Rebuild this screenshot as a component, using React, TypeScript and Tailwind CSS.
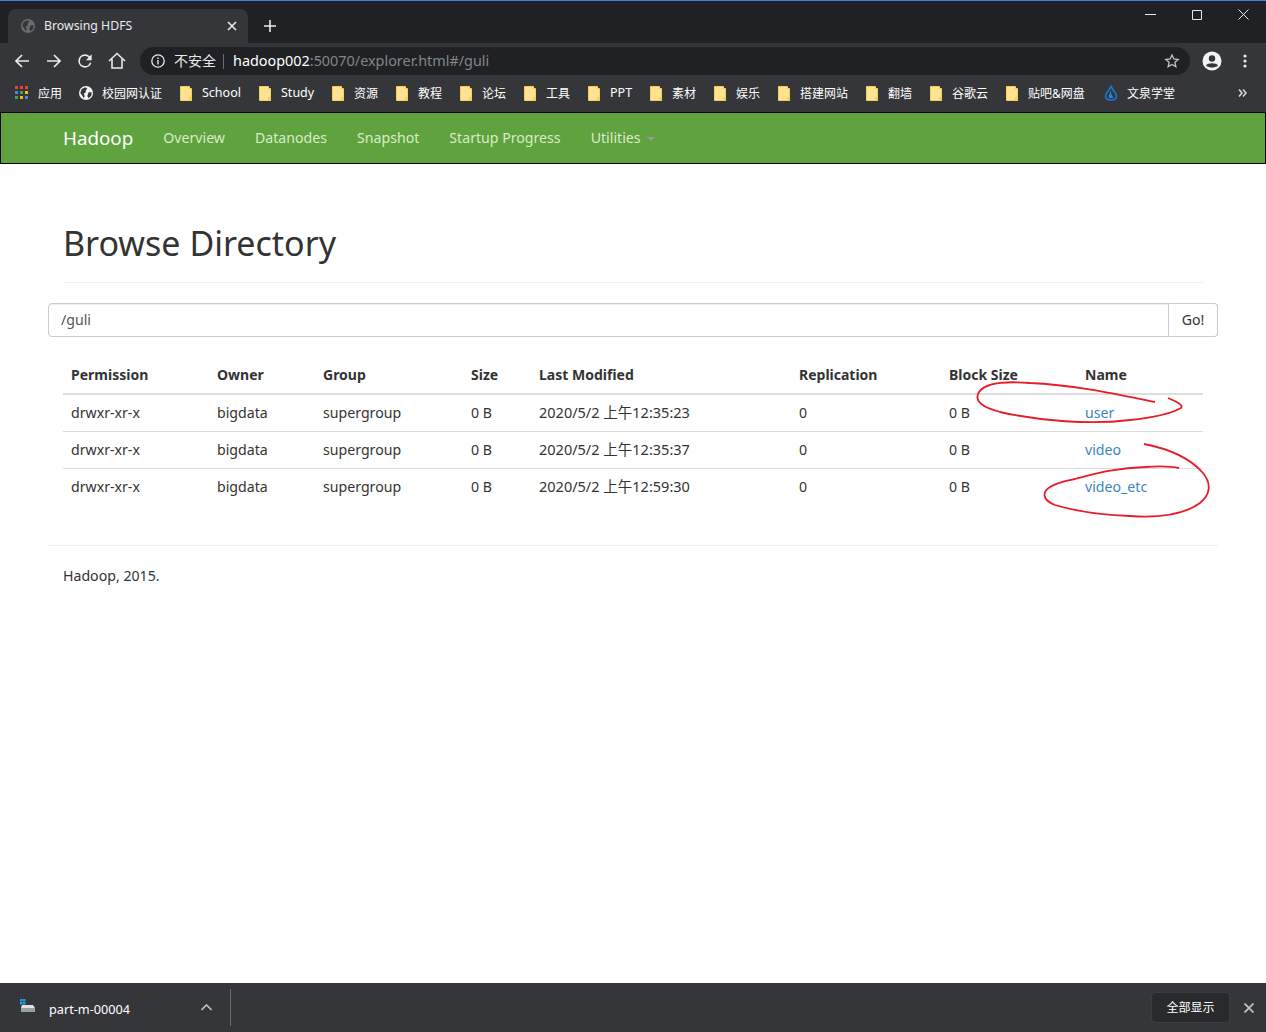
const cjk = "font-['Noto_Sans','Noto_Sans_CJK_SC',sans-serif]";

function Folder() {
  return (
    <svg width="12" height="15" viewBox="0 0 12 15" className="shrink-0">
      <path d="M0.5 0.5H9.5V2.5H11.5V14.5H0.5Z" fill="#fde293" stroke="#f6cf56" />
      <path d="M9 11H12V15H9Z" fill="#f6cf56" />
    </svg>
  );
}

function Globe({ fill, cut, size }: { fill: string; cut: string; size: number }) {
  return (
    <svg width={size} height={size} viewBox="0 0 16 16" className="shrink-0">
      <circle cx="8" cy="8" r="8" fill={fill} />
      <path d="M3 3.5L7.5 1.5L9.5 3L7.5 5.5L8 7L5.5 8.5L6.5 11.5L5.5 14L3.5 10.5L1.5 8ZM11 7L14.5 7L14 11L11 14L9.5 11.5Z" fill={cut} />
    </svg>
  );
}

function Bookmark({ label, w, latin }: { label: string; w: string; latin?: boolean }) {
  return (
    <div className={`flex items-center gap-[10px] ${w}`}>
      <Folder />
      <span className={`${latin ? "text-[12.5px]" : "text-[12px]"} text-white whitespace-nowrap pt-px`}>{label}</span>
    </div>
  );
}

const navItems = ["Overview", "Datanodes", "Snapshot", "Startup Progress"];
const rows = [
  ["drwxr-xr-x", "bigdata", "supergroup", "0 B", "2020/5/2 上午12:35:23", "0", "0 B", "user"],
  ["drwxr-xr-x", "bigdata", "supergroup", "0 B", "2020/5/2 上午12:35:37", "0", "0 B", "video"],
  ["drwxr-xr-x", "bigdata", "supergroup", "0 B", "2020/5/2 上午12:59:30", "0", "0 B", "video_etc"],
];
const headers = ["Permission", "Owner", "Group", "Size", "Last Modified", "Replication", "Block Size", "Name"];
const widths = ["w-[146px]", "w-[106px]", "w-[148px]", "w-[68px]", "w-[260px]", "w-[150px]", "w-[136px]", "w-[126px]"];

export default function App() {
  return (
    <div className={`relative flex flex-col h-[1032px] w-[1266px] overflow-hidden bg-white ${cjk}`}>
      {/* title bar */}
      <div className="h-[43px] shrink-0 bg-[#202124] border-t border-[#3b82e6] flex items-end pl-2 relative">
        <div className="w-[240px] h-[34px] bg-[#35363a] rounded-t-lg flex items-center pl-[13px] pr-[11px]">
          <Globe fill="#6a6c70" cut="#35363a" size={14} />
          <span className="ml-[9px] text-[12.3px] text-[#e8eaed] flex-1 pt-px">Browsing HDFS</span>
          <svg width="10" height="10" viewBox="0 0 10 10"><path d="M1 1L9 9M9 1L1 9" stroke="#e8eaed" strokeWidth="1.6" /></svg>
        </div>
        <div className="h-[34px] flex items-center ml-4">
          <svg width="12" height="12" viewBox="0 0 12 12"><path d="M6 0V12M0 6H12" stroke="#e8eaed" strokeWidth="1.6" /></svg>
        </div>
        <div className="absolute right-[17px] top-[8px] flex items-center gap-[36px]">
          <svg width="11" height="11" viewBox="0 0 11 11"><path d="M0 5.5H11" stroke="#e8eaed" /></svg>
          <svg width="10" height="10" viewBox="0 0 10 10"><path d="M.5.5H9.5V9.5H.5Z" fill="none" stroke="#e8eaed" /></svg>
          <svg width="11" height="11" viewBox="0 0 11 11"><path d="M.5.5L10.5 10.5M10.5.5L.5 10.5" stroke="#e8eaed" /></svg>
        </div>
      </div>
      {/* toolbar */}
      <div className="h-[32px] shrink-0 bg-[#35363a] flex items-end">
        <div className="flex items-center w-[140px] h-[28px] pl-[15px]">
          <svg width="14" height="14" viewBox="0 0 14 14" fill="none" stroke="#e8eaed" strokeWidth="1.7"><path d="M14 7H1.5M7 1L1 7L7 13" /></svg>
          <svg width="14" height="14" viewBox="0 0 14 14" fill="none" stroke="#e8eaed" strokeWidth="1.7" className="ml-[18px]"><path d="M0 7H12.5M7 1L13 7L7 13" /></svg>
          <svg width="20" height="20" viewBox="0 0 24 24" className="ml-[14px]"><path fill="#e8eaed" d="M17.65 6.35A7.96 7.96 0 0 0 12 4a8 8 0 1 0 7.73 10h-2.08A6 6 0 1 1 12 6c1.66 0 3.14.69 4.22 1.78L13 11h7V4z" /></svg>
          <svg width="18" height="18" viewBox="0 0 18 18" fill="none" stroke="#e8eaed" strokeWidth="1.6" className="ml-[13px]"><path d="M1 9L9 1.5L17 9M4 7V16H14V7" /></svg>
        </div>
        <div className="w-[1050px] h-[28px] bg-[#202124] rounded-full flex items-center pl-[11px] pr-[10px]">
          <svg width="14" height="14" viewBox="0 0 14 14" className="shrink-0">
            <circle cx="7" cy="7" r="6.2" fill="none" stroke="#e8eaed" strokeWidth="1.3" />
            <path d="M7 6V10.5M7 3.5V5" stroke="#e8eaed" strokeWidth="1.4" />
          </svg>
          <span className="ml-[9px] text-[14px] text-[#e8eaed] leading-none">不安全</span>
          <span className="ml-[7px] mr-[9px] h-[15px] w-px bg-[#6b6d70]" />
          <span className="text-[14.4px] text-white -mt-px">hadoop002<span className="text-[#80868b]">:50070/explorer.html#/guli</span></span>
          <svg width="16" height="16" viewBox="0 0 24 24" fill="none" stroke="#bdc1c6" strokeWidth="2" className="ml-auto"><path d="M12 3l2.8 6 6.5.7-4.9 4.3 1.4 6.4L12 17.2l-5.8 3.2 1.4-6.4-4.9-4.3 6.5-.7z" /></svg>
        </div>
        <div className="h-[28px] flex items-center pl-[12px]">
          <svg width="20" height="20" viewBox="0 0 20 20">
            <circle cx="10" cy="10" r="9.5" fill="#f1f3f4" />
            <circle cx="10" cy="7.5" r="3.2" fill="#35363a" />
            <path d="M4 14.5C5.5 11.5 14.5 11.5 16 14.5C14.5 16 12 16.5 10 16.5C8 16.5 5.5 16 4 14.5Z" fill="#35363a" />
          </svg>
          <svg width="4" height="14" viewBox="0 0 4 14" className="ml-[21px]" fill="#e8eaed">
            <circle cx="2" cy="2" r="1.6" /><circle cx="2" cy="7" r="1.6" /><circle cx="2" cy="12" r="1.6" />
          </svg>
        </div>
      </div>
      {/* bookmarks */}
      <div className="h-[37px] shrink-0 bg-[#35363a] flex items-center pl-[15px] pb-[1px]">
        <div className="flex items-center gap-[10px] w-[64px]">
          <svg width="13" height="14" viewBox="0 0 13 14" className="shrink-0">
            <path d="M0 0h3v3H0z" fill="#ea4335" /><path d="M5 0h3v3H5z" fill="#ea4335" /><path d="M10 0h3v3h-3z" fill="#ea4335" />
            <path d="M0 5h3v3H0z" fill="#4285f4" /><path d="M5 5h3v3H5z" fill="#34a853" /><path d="M10 5h3v3h-3z" fill="#fbbc05" />
            <path d="M0 10h3v3H0z" fill="#34a853" /><path d="M5 10h3v3H5z" fill="#fbbc05" /><path d="M10 10h3v3h-3z" fill="#4285f4" />
          </svg>
          <span className="text-[12px] text-white pt-px">应用</span>
        </div>
        <div className="flex items-center gap-[9px] w-[101px]">
          <Globe fill="#f1f3f4" cut="#35363a" size={14} />
          <span className="text-[12px] text-white whitespace-nowrap pt-px">校园网认证</span>
        </div>
        <Bookmark label="School" w="w-[79px]" latin />
        <Bookmark label="Study" w="w-[73px]" latin />
        <Bookmark label="资源" w="w-[64px]" />
        <Bookmark label="教程" w="w-[64px]" />
        <Bookmark label="论坛" w="w-[64px]" />
        <Bookmark label="工具" w="w-[64px]" />
        <Bookmark label="PPT" w="w-[62px]" latin />
        <Bookmark label="素材" w="w-[64px]" />
        <Bookmark label="娱乐" w="w-[64px]" />
        <Bookmark label="搭建网站" w="w-[88px]" />
        <Bookmark label="翻墙" w="w-[64px]" />
        <Bookmark label="谷歌云" w="w-[76px]" />
        <Bookmark label="贴吧&网盘" w="w-[98px]" />
        <div className="flex items-center gap-[9px]">
          <svg width="14" height="16" viewBox="0 0 14 16" className="shrink-0" fill="none" strokeLinejoin="round">
            <path d="M7 1C7.5 4 12.5 8 12.5 11.5C12.5 14 10 15 7 15C4 15 1.5 14 1.5 11.5C1.5 8 6.5 4 7 1Z" stroke="#1976d2" strokeWidth="1.6" />
            <path d="M7 5C6.5 8 4.5 10 4.5 12C4.5 13.2 8 13.5 10 12.5C8 12 7 9 7 5Z" fill="#1e88e5" />
          </svg>
          <span className="text-[12px] text-white whitespace-nowrap pt-px">文泉学堂</span>
        </div>
        <svg width="9" height="8" viewBox="0 0 9 8" fill="none" stroke="#dadce0" strokeWidth="1.5" className="ml-auto mr-[19px]"><path d="M1 .5L4 4L1 7.5M5 .5L8 4L5 7.5" /></svg>
      </div>
      {/* navbar */}
      <div className="h-[52px] shrink-0 bg-[#5fa33e] border border-black flex items-center pl-[62px]">
        <span className="text-[18.8px] text-white mr-[30px]">Hadoop</span>
        <div className="flex items-center gap-[30px]">
          {navItems.map((n) => (
            <span key={n} className="text-[14.15px] text-[#d8ecc9]">{n}</span>
          ))}
          <span className="text-[14.15px] text-[#d8ecc9] flex items-center gap-[6px]">
            Utilities
            <span className="w-0 h-0 border-x-4 border-x-transparent border-t-4 border-t-[#9a9a9a] mt-[2px]" />
          </span>
        </div>
      </div>
      {/* page */}
      <div className="flex-1 px-[48px] text-[14.15px] text-[#333]">
        <div className="mx-[15px] mr-0 w-[1140px] mt-[59px] pb-[19px] border-b border-[#eee]">
          <h1 className="text-[34px] leading-[40px] text-[#333] font-normal">Browse Directory</h1>
        </div>
        <div className="mt-[20px] flex h-[34px]">
          <div className="flex-1 border border-[#ccc] rounded-l-[4px] flex items-center px-3 text-[#555] shadow-[inset_0_1px_1px_rgba(0,0,0,0.075)]">/guli</div>
          <div className="w-[49px] border border-l-0 border-[#ccc] rounded-r-[4px] flex items-center justify-center">Go!</div>
        </div>
        <table className="mt-[20px] ml-[15px] table-fixed w-[1140px] border-collapse">
          <thead>
            <tr className="border-b-2 border-[#ddd]">
              {headers.map((h, i) => (
                <th key={h} className={`${widths[i]} p-2 text-left font-bold text-[14px] leading-[20px]`}>{h}</th>
              ))}
            </tr>
          </thead>
          <tbody>
            {rows.map((r, ri) => (
              <tr key={ri} className={ri < 2 ? "border-b border-[#ddd]" : ""}>
                {r.map((c, i) => (
                  <td key={i} className={`px-2 leading-[20px] whitespace-nowrap ${i === 7 ? "text-[#4084bf]" : ""} ${i === 4 ? "text-[14.5px] pt-[7px] pb-[9px]" : "py-2"}`}>{c}</td>
                ))}
              </tr>
            ))}
          </tbody>
        </table>
        <div className="mt-[40px] border-t border-[#eee] pt-[20px] pl-[15px] leading-[20px]">Hadoop, 2015.</div>
      </div>
      {/* download shelf */}
      <div className="h-[49px] shrink-0 bg-[#35363a] flex items-center pl-[20px] pr-[12px]">
        <svg width="16" height="14" viewBox="0 0 16 14" className="shrink-0 -mt-[3px]">
          <path d="M0 0h2.5v2.5H0zM3 0h2.5v2.5H3zM0 3h2.5v2.5H0zM3 3h2.5v2.5H3z" fill="#1ba1e2" />
          <path d="M2 6H13L15 9V13H1V9Z" fill="#dfe1e5" />
          <path d="M1 9H15V13H1Z" fill="#9aa0a6" />
          <circle cx="12" cy="11" r="1" fill="#34d058" />
        </svg>
        <span className="ml-[13px] text-[12.7px] text-white pt-[5px]">part-m-00004</span>
        <svg width="11" height="7" viewBox="0 0 11 7" fill="none" stroke="#bdc1c6" strokeWidth="1.6" className="ml-[71px]"><path d="M.5 6L5.5 1L10.5 6" /></svg>
        <span className="ml-[18px] h-[37px] w-px bg-[#6a6c70]" />
        <div className="ml-auto w-[79px] h-[31px] rounded-[4px] bg-[#292a2d] border border-[#3c3d41] flex items-center justify-center text-[12px] text-white pt-px">全部显示</div>
        <svg width="10" height="10" viewBox="0 0 10 10" className="ml-[14px]"><path d="M.5.5L9.5 9.5M9.5.5L.5 9.5" stroke="#bdc1c6" strokeWidth="1.8" /></svg>
      </div>
      {/* hand-drawn red annotations */}
      <svg className="absolute left-0 top-0 pointer-events-none" width="1266" height="1032" fill="none" stroke="#e81c26" strokeWidth="1.8">
        <path d="M1155 402C1120 395 1075 385 1030 383C1005 381 985 383 979 392C973 402 985 408 1000 412C1040 421 1090 425 1130 420C1150 418 1170 414 1181 408C1184 405 1175 401 1168 398" />
        <path d="M1144 444C1170 449 1190 458 1203 473C1212 484 1210 495 1200 503C1185 514 1160 518 1130 516C1100 515 1075 511 1055 505C1042 500 1042 492 1050 487C1058 482 1065 481 1075 479C1095 474 1115 468 1145 467C1160 466 1170 466 1179 468" />
      </svg>
    </div>
  );
}
